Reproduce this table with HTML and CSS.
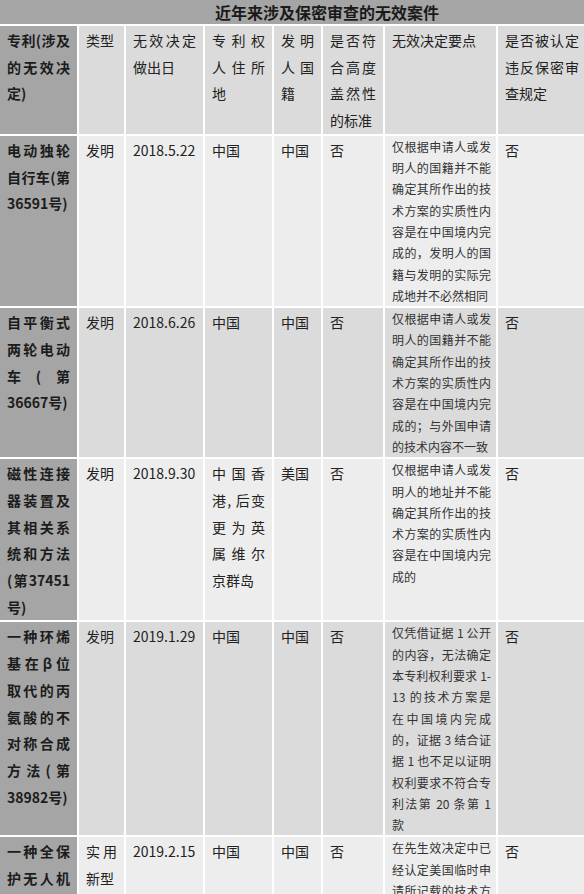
FILE: index.html
```html
<!DOCTYPE html>
<html lang="zh-CN">
<head>
<meta charset="utf-8">
<title>近年来涉及保密审查的无效案件</title>
<link rel="stylesheet" href="styles.css">
</head>
<body>
<table class="cases">
  <colgroup>
    <col class="w1"><col class="w2"><col class="w3"><col class="w4">
    <col class="w5"><col class="w6"><col class="w7"><col class="w8">
  </colgroup>
  <tr>
    <td class="title" colspan="8">近年来涉及保密审查的无效案件</td>
  </tr>
  <tr class="head">
    <td class="name">专利(涉及的无效决定)</td>
    <td>类型</td>
    <td>无效决定做出日</td>
    <td>专利权人住所地</td>
    <td>发明人国籍</td>
    <td>是否符合高度盖然性的标准</td>
    <td>无效决定要点</td>
    <td>是否被认定违反保密审查规定</td>
  </tr>
  <tr class="odd">
    <td class="name">电动独轮自行车(第36591号)</td>
    <td>发明</td>
    <td>2018.5.22</td>
    <td>中国</td>
    <td>中国</td>
    <td>否</td>
    <td class="pt">仅根据申请人或发明人的国籍并不能确定其所作出的技术方案的实质性内容是在中国境内完成的，发明人的国籍与发明的实际完成地并不必然相同</td>
    <td>否</td>
  </tr>
  <tr class="even">
    <td class="name">自平衡式两轮电动车(第36667号)</td>
    <td>发明</td>
    <td>2018.6.26</td>
    <td>中国</td>
    <td>中国</td>
    <td>否</td>
    <td class="pt">仅根据申请人或发明人的国籍并不能确定其所作出的技术方案的实质性内容是在中国境内完成的；与外国申请的技术内容不一致</td>
    <td>否</td>
  </tr>
  <tr class="odd">
    <td class="name">磁性连接器装置及其相关系统和方法(第37451号)</td>
    <td>发明</td>
    <td>2018.9.30</td>
    <td>中国香港, 后变更为英属维尔京群岛</td>
    <td>美国</td>
    <td>否</td>
    <td class="pt">仅根据申请人或发明人的地址并不能确定其所作出的技术方案的实质性内容是在中国境内完成的</td>
    <td>否</td>
  </tr>
  <tr class="even">
    <td class="name">一种环烯基在β位取代的丙氨酸的不对称合成方法(第38982号)</td>
    <td>发明</td>
    <td>2019.1.29</td>
    <td>中国</td>
    <td>中国</td>
    <td>否</td>
    <td class="pt">仅凭借证据 1 公开的内容，无法确定本专利权利要求 1-<wbr>13 的技术方案是在中国境内完成的，证据 3 结合证据 1 也不足以证明权利要求不符合专利法第 20 条第 1 款</td>
    <td>否</td>
  </tr>
  <tr class="odd">
    <td class="name">一种全保护无人机(第39127号)</td>
    <td>实用新型</td>
    <td>2019.2.15</td>
    <td>中国</td>
    <td>中国</td>
    <td>否</td>
    <td class="pt">在先生效决定中已经认定美国临时申请所记载的技术方案的实质性内容是在美国完成的</td>
    <td>否</td>
  </tr>
</table>
</body>
</html>
```

FILE: styles.css
```css
html, body {
  margin: 0;
  padding: 0;
  overflow: hidden;
  background: #ffffff;
}

body {
  font-family: "Noto Sans CJK SC", "Noto Sans", sans-serif;
  font-size: 14px;
  color: #222222;
}

.cases {
  border-collapse: separate;
  border-spacing: 2px;
  margin: -2px 0 0 -2px;
  table-layout: fixed;
  width: 590px;
}

.w1 { width: 77px; }
.w2 { width: 45px; }
.w3 { width: 77px; }
.w4 { width: 67px; }
.w5 { width: 47px; }
.w6 { width: 60px; }
.w7 { width: 111px; }
.w8 { width: 88px; }

.cases td {
  vertical-align: top;
  text-align: justify;
  padding: 1px 7px 0 7px;
  line-height: 26.7px;
  word-break: normal;
}

.cases td.title {
  background: #a5a5a5;
  font-size: 16px;
  font-weight: 700;
  line-height: 24px;
  height: 24px;
  padding: 0 0 0 68px;
  text-align: center;
  color: #1a1a1a;
}

.head td { background: #dbdbdb; }
.odd td { background: #ededed; }
.even td { background: #dbdbdb; }

.cases td.name {
  background: #a5a5a5;
  font-weight: 700;
  color: #1c1c1c;
}

.cases td.pt {
  font-size: 12px;
  line-height: 21.3px;
  padding-top: 0;
  padding-right: 5px;
  color: #333333;
}
```
